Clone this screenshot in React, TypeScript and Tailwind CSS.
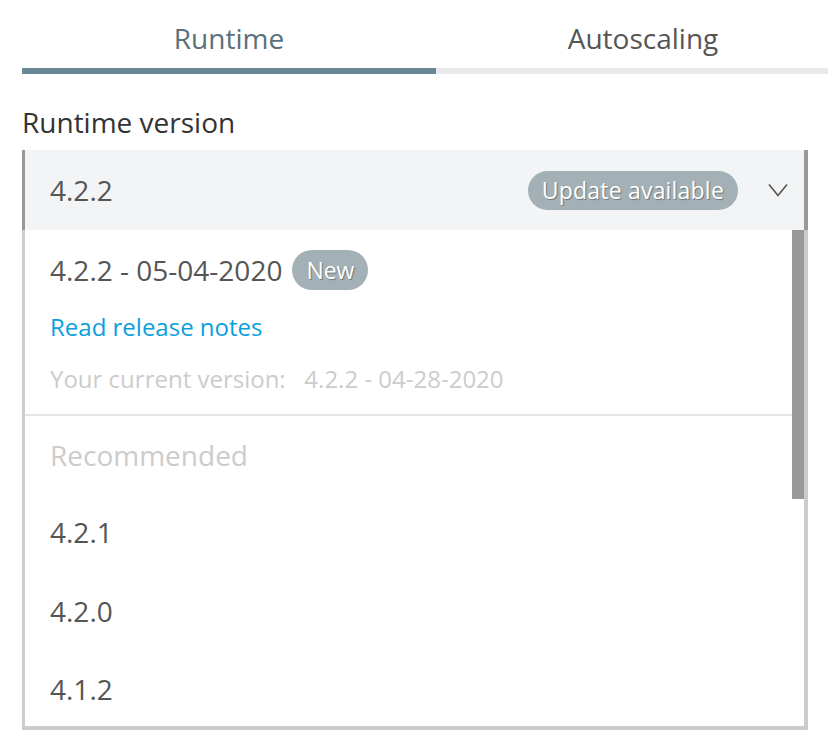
import React from "react";

export default function App() {
  const font = { fontFamily: '"Open Sans", "Noto Sans", sans-serif' };
  return (
    <div className="w-[828px] h-[742px] overflow-hidden bg-white" style={font}>
      {/* Tabs */}
      <div className="ml-[22px] w-[828px] flex">
        <div className="w-[414px] flex flex-col">
          <div className="h-[68px] flex items-center justify-center text-[28px] text-[#5b707c] pt-[7px]">Runtime</div>
          <div className="h-[6px] bg-[#6a8796]" />
        </div>
        <div className="w-[414px] flex flex-col">
          <div className="h-[68px] flex items-center justify-center text-[28px] text-[#555555] pt-[7px]">Autoscaling</div>
          <div className="h-[6px] bg-[#e8e9eb]" />
        </div>
      </div>

      <div className="ml-[22px] w-[786px]">
        <div className="mt-[25px] mb-[5px] h-[46px] flex items-center text-[28px] text-[#333333]">Runtime version</div>

        {/* Select header */}
        <div className="h-[80px] bg-[#f3f4f6] border-l-[3px] border-r-[4px] border-[#999999] flex items-center pl-[25px] pr-[16px]">
          <span className="text-[28px] text-[#555555] flex-1">4.2.2</span>
          <span
            className="h-[39px] px-[14px] rounded-full bg-[#a3b1b6] text-white text-[23px] flex items-center tracking-[0.2px]"
            style={{ textShadow: "1px 1px 1px rgba(0,0,0,0.35)" }}
          >
            Update available
          </span>
          <svg className="ml-[30px]" width="20" height="14" viewBox="0 0 20 14" fill="none">
            <path d="M1 1.5 L10 12.5 L19 1.5" stroke="#555555" strokeWidth="1.6" />
          </svg>
        </div>

        {/* Dropdown list */}
        <div className="h-[500px] border-l-[3px] border-r-[4px] border-b-[4px] border-[#cccccc] flex">
          <div className="flex-1 flex flex-col">
            <div className="pl-[25px] pt-[20px]">
              <div className="flex items-center h-[40px]">
                <span className="text-[28px] text-[#555555]">4.2.2 - 05-04-2020</span>
                <span
                  className="ml-[10px] h-[40px] w-[76px] rounded-full bg-[#a3b1b6] text-white text-[23px] flex items-center justify-center"
                  style={{ textShadow: "1px 1px 1px rgba(0,0,0,0.35)" }}
                >
                  New
                </span>
              </div>
              <div className="mt-[17px] h-[40px] flex items-center text-[24px] text-[#0aa0dc]">Read release notes</div>
              <div className="mt-[12px] h-[40px] flex items-center text-[24px] text-[#cccccc] whitespace-pre">
                {"Your current version:   4.2.2 - 04-28-2020"}
              </div>
            </div>
            <div className="mt-[15px] h-[2px] bg-[#e5e5e5]" />
            <div className="pl-[25px] h-[79px] flex items-center text-[28px] text-[#cccccc] pt-[2px]">Recommended</div>
            <div className="pl-[25px] h-[79px] flex items-center text-[28px] text-[#555555] pt-[2px]">4.2.1</div>
            <div className="pl-[25px] h-[80px] flex items-center text-[28px] text-[#555555] pt-[4px]">4.2.0</div>
            <div className="pl-[25px] h-[80px] flex items-center text-[28px] text-[#555555] pt-[4px]">4.1.2</div>
          </div>
          <div className="w-[12px] flex flex-col">
            <div className="h-[269px] bg-[#999999]" />
          </div>
        </div>
      </div>
    </div>
  );
}
